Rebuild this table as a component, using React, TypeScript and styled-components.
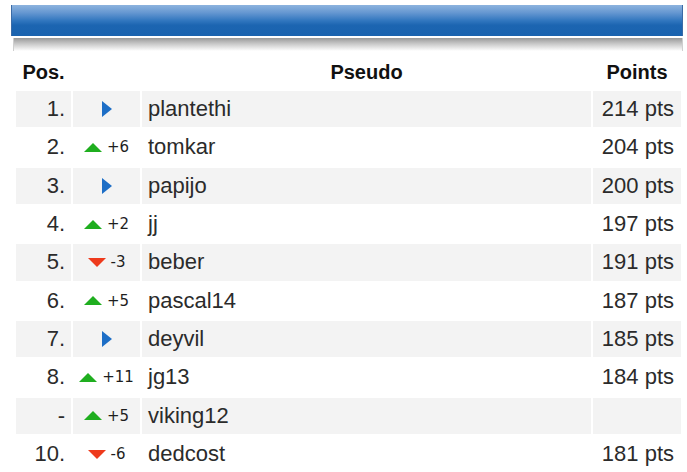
import * as React from 'react'
import styled, { createGlobalStyle } from 'styled-components'

type Trend = 'same' | 'up' | 'down'

interface Entry {
  pos: string
  trend: Trend
  delta?: string
  name: string
  points?: number
}

const entries: Entry[] = [
  { pos: '1.', trend: 'same', name: 'plantethi', points: 214 },
  { pos: '2.', trend: 'up', delta: '+6', name: 'tomkar', points: 204 },
  { pos: '3.', trend: 'same', name: 'papijo', points: 200 },
  { pos: '4.', trend: 'up', delta: '+2', name: 'jj', points: 197 },
  { pos: '5.', trend: 'down', delta: '-3', name: 'beber', points: 191 },
  { pos: '6.', trend: 'up', delta: '+5', name: 'pascal14', points: 187 },
  { pos: '7.', trend: 'same', name: 'deyvil', points: 185 },
  { pos: '8.', trend: 'up', delta: '+11', name: 'jg13', points: 184 },
  { pos: '-', trend: 'up', delta: '+5', name: 'viking12' },
  { pos: '10.', trend: 'down', delta: '-6', name: 'dedcost', points: 181 },
]

const GlobalStyle = createGlobalStyle`
  html, body {
    margin: 0;
    padding: 0;
    background: #fff;
  }
  body {
    font-family: 'Liberation Sans', Arial, sans-serif;
    color: #2e2e2e;
  }
`

const Banner = styled.div`
  height: 31px;
  margin: 5px 4px 0 11px;
  border-left: 1px solid #3b6ba6;
  border-right: 1px solid #3b6ba6;
  background: linear-gradient(
    to bottom,
    #8db3de 0%,
    #6597d1 25%,
    #3277bf 50%,
    #1c65b1 65%,
    #1a63af 100%
  );
`

const BannerShadow = styled.div`
  height: 13px;
  margin: 2px 4px 0 13px;
  border-left: 1px solid #cfcfcf;
  border-right: 1px solid #cfcfcf;
  background: linear-gradient(to bottom, #999 0%, #c9c9c9 45%, #fff 100%);
`

const Table = styled.table`
  width: 669px;
  margin: 6px 0 0 14px;
  border-collapse: separate;
  border-spacing: 2px;
  table-layout: fixed;
`

const HeadCell = styled.th`
  height: 26px;
  padding: 0 0 4px 0;
  font-size: 20px;
  font-weight: bold;
  color: #111;
  text-align: center;
  vertical-align: middle;
`

const Row = styled.tr<{ $shaded: boolean }>`
  td {
    background: ${p => (p.$shaded ? '#f3f3f3' : '#fff')};
  }
`

const Cell = styled.td<{ $align?: 'left' | 'right' | 'center' }>`
  height: 36.33px;
  padding: 0 6px;
  font-size: 22px;
  color: #2b2b2b;
  text-align: ${p => p.$align || 'left'};
  vertical-align: middle;
  white-space: nowrap;
`

const PointsCell = styled(Cell)`
  padding-right: 7px;
`

const Move = styled.div`
  display: flex;
  align-items: center;
  justify-content: center;
  gap: 5px;
`

const Delta = styled.span`
  font-family: 'DejaVu Sans', sans-serif;
  font-size: 15px;
  color: #1e1e1e;
`

const Arrow = styled.span<{ $trend: Trend }>`
  display: inline-block;
  width: 0;
  height: 0;
  ${p =>
    p.$trend === 'same'
      ? `
    border-left: 10px solid #1d6ec6;
    border-top: 8px solid transparent;
    border-bottom: 8px solid transparent;
    margin-left: 1px;
  `
      : p.$trend === 'up'
        ? `
    border-bottom: 9px solid #1fae1f;
    border-left: 9px solid transparent;
    border-right: 9px solid transparent;
  `
        : `
    border-top: 9px solid #ee3a1c;
    border-left: 9px solid transparent;
    border-right: 9px solid transparent;
  `}
`

const App: React.FC = () => (
  <>
    <GlobalStyle />
    <Banner />
    <BannerShadow />
    <Table>
      <colgroup>
        <col style={{ width: 55 }} />
        <col style={{ width: 67 }} />
        <col style={{ width: 449 }} />
        <col style={{ width: 88 }} />
      </colgroup>
      <thead>
        <tr>
          <HeadCell>Pos.</HeadCell>
          <HeadCell />
          <HeadCell>Pseudo</HeadCell>
          <HeadCell>Points</HeadCell>
        </tr>
      </thead>
      <tbody>
        {entries.map((e, i) => (
          <Row key={e.name} $shaded={i % 2 === 0}>
            <Cell $align="right">{e.pos}</Cell>
            <Cell $align="center">
              <Move>
                <Arrow $trend={e.trend} />
                {e.delta && <Delta>{e.delta}</Delta>}
              </Move>
            </Cell>
            <Cell>{e.name}</Cell>
            <PointsCell $align="right">{e.points ? `${e.points} pts` : ''}</PointsCell>
          </Row>
        ))}
      </tbody>
    </Table>
  </>
)

export default App
